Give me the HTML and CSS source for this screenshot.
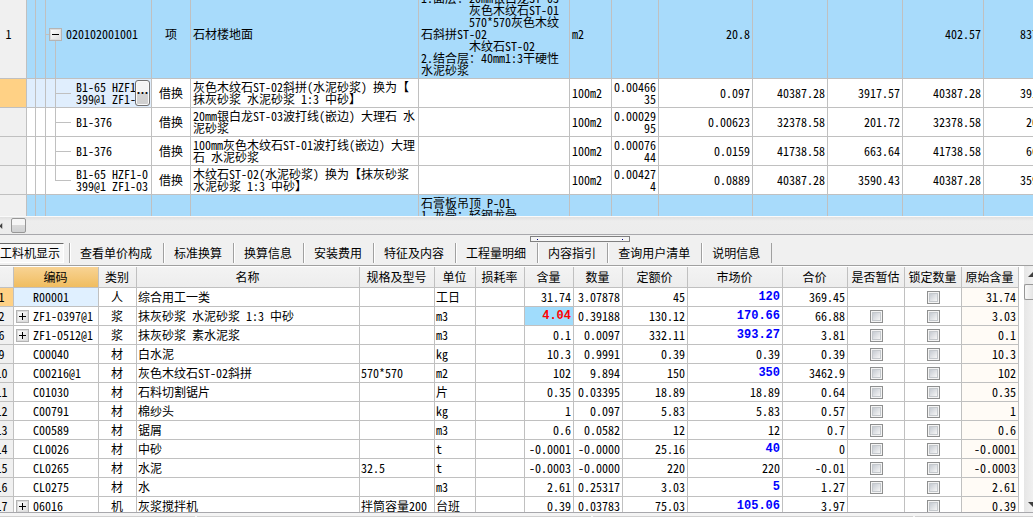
FILE: index.html
```
<!DOCTYPE html>
<html lang="zh-CN">
<head>
<meta charset="utf-8">
<title>石材楼地面</title>
<link rel="stylesheet" href="styles.css">
</head>
<body>
<main class="app">
<section class="pane bill-pane">
<table class="grid bill">
<colgroup><col class="w27"><col class="w9"><col class="w10"><col class="w106"><col class="w39"><col><col class="w151"><col class="w42"><col class="w47"><col class="w94"><col class="w75"><col class="w75"><col class="w81"><col class="w83"></colgroup>
<tbody>
<tr class="group tall"><td>1</td><td></td><td></td><td class="root"><div class="node"><button class="toggle" type="button" aria-label="-"></button><span>020102001001</span></div></td><td>项</td><td>石材楼地面</td><td>1.面层：20mm银白龙ST-03<br>        灰色木纹石ST-01<br>        570*570灰色木纹<br>石斜拼ST-02<br>        木纹石ST-02<br>2.结合层：40mm1:3干硬性<br>水泥砂浆</td><td>m2</td><td></td><td>20.8</td><td></td><td></td><td>402.57</td><td>8373.46</td></tr>
<tr class="current"><td></td><td></td><td></td><td class="leaf"><div class="picker"><span>B1-65 HZF1<br>399@1 ZF1-</span><button class="more" type="button">…</button></div></td><td>借换</td><td>灰色木纹石ST-02斜拼(水泥砂浆) 换为【<br>抹灰砂浆 水泥砂浆 1:3 中砂】</td><td></td><td>100m2</td><td>0.00466<br>35</td><td>0.097</td><td>40387.28</td><td>3917.57</td><td>40387.28</td><td>3917.57</td></tr>
<tr><td></td><td></td><td></td><td class="leaf">B1-376</td><td>借换</td><td>20mm银白龙ST-03波打线(嵌边) 大理石 水<br>泥砂浆</td><td></td><td>100m2</td><td>0.00029<br>95</td><td>0.00623</td><td>32378.58</td><td>201.72</td><td>32378.58</td><td>201.72</td></tr>
<tr><td></td><td></td><td></td><td class="leaf">B1-376</td><td>借换</td><td>100mm灰色木纹石ST-01波打线(嵌边) 大理<br>石 水泥砂浆</td><td></td><td>100m2</td><td>0.00076<br>44</td><td>0.0159</td><td>41738.58</td><td>663.64</td><td>41738.58</td><td>663.64</td></tr>
<tr><td></td><td></td><td></td><td class="leaf last">B1-65 HZF1-0<br>399@1 ZF1-03</td><td>借换</td><td>木纹石ST-02(水泥砂浆) 换为【抹灰砂浆<br>水泥砂浆 1:3 中砂】</td><td></td><td>100m2</td><td>0.00427<br>4</td><td>0.0889</td><td>40387.28</td><td>3590.43</td><td>40387.28</td><td>3590.43</td></tr>
<tr class="group next"><td></td><td></td><td></td><td></td><td></td><td></td><td>石膏板吊顶 P-01<br>1.龙骨：轻钢龙骨</td><td></td><td></td><td></td><td></td><td></td><td></td><td></td></tr>
</tbody>
</table>
</section>

<div class="hscroll"><svg class="arrow-left" viewBox="0 0 4 8" aria-hidden="true"><path d="M3 0v8L-1 4z"/></svg><span class="hthumb"></span></div>

<nav class="tabs">
<button class="tab active" type="button">工料机显示</button>
<button class="tab" type="button">查看单价构成</button>
<button class="tab" type="button">标准换算</button>
<button class="tab" type="button">换算信息</button>
<button class="tab" type="button">安装费用</button>
<button class="tab" type="button">特征及内容</button>
<button class="tab" type="button">工程量明细</button>
<button class="tab" type="button">内容指引</button>
<button class="tab" type="button">查询用户清单</button>
<button class="tab" type="button">说明信息</button>
<span class="splitter"></span>
</nav>

<section class="pane materials-pane">
<div class="materials-view">
<table class="grid materials">
<colgroup><col class="w22"><col class="w85"><col class="w38"><col><col class="w75"><col class="w41"><col class="w49"><col class="w49"><col class="w49"><col class="w65"><col class="w95"><col class="w65"><col class="w57"><col class="w57"><col class="w57"></colgroup>
<thead><tr><th></th><th class="sorted">编码</th><th>类别</th><th>名称</th><th>规格及型号</th><th>单位</th><th>损耗率</th><th>含量</th><th>数量</th><th>定额价</th><th>市场价</th><th>合价</th><th>是否暂估</th><th>锁定数量</th><th>原始含量</th></tr></thead>
<tbody>
<tr class="current"><td>1</td><td>R00001</td><td>人</td><td>综合用工一类</td><td></td><td>工日</td><td></td><td>31.74</td><td>3.07878</td><td>45</td><td class="changed">120</td><td>369.45</td><td></td><td><input type="checkbox" aria-label="锁定数量"></td><td>31.74</td></tr>
<tr><td>2</td><td><div class="node"><button class="toggle plus" type="button" aria-label="+"></button><span>ZF1-0397@1</span></div></td><td>浆</td><td>抹灰砂浆 水泥砂浆 1:3 中砂</td><td></td><td>m3</td><td></td><td class="focus">4.04</td><td>0.39188</td><td>130.12</td><td class="changed">170.66</td><td>66.88</td><td><input type="checkbox" aria-label="是否暂估"></td><td><input type="checkbox" aria-label="锁定数量"></td><td>3.03</td></tr>
<tr><td>6</td><td><div class="node"><button class="toggle plus" type="button" aria-label="+"></button><span>ZF1-0512@1</span></div></td><td>浆</td><td>抹灰砂浆 素水泥浆</td><td></td><td>m3</td><td></td><td>0.1</td><td>0.0097</td><td>332.11</td><td class="changed">393.27</td><td>3.81</td><td><input type="checkbox" aria-label="是否暂估"></td><td><input type="checkbox" aria-label="锁定数量"></td><td>0.1</td></tr>
<tr><td>9</td><td>C00040</td><td>材</td><td>白水泥</td><td></td><td>kg</td><td></td><td>10.3</td><td>0.9991</td><td>0.39</td><td>0.39</td><td>0.39</td><td><input type="checkbox" aria-label="是否暂估"></td><td><input type="checkbox" aria-label="锁定数量"></td><td>10.3</td></tr>
<tr><td>10</td><td>C00216@1</td><td>材</td><td>灰色木纹石ST-02斜拼</td><td>570*570</td><td>m2</td><td></td><td>102</td><td>9.894</td><td>150</td><td class="changed">350</td><td>3462.9</td><td><input type="checkbox" aria-label="是否暂估"></td><td><input type="checkbox" aria-label="锁定数量"></td><td>102</td></tr>
<tr><td>11</td><td>C01030</td><td>材</td><td>石料切割锯片</td><td></td><td>片</td><td></td><td>0.35</td><td>0.03395</td><td>18.89</td><td>18.89</td><td>0.64</td><td><input type="checkbox" aria-label="是否暂估"></td><td><input type="checkbox" aria-label="锁定数量"></td><td>0.35</td></tr>
<tr><td>12</td><td>C00791</td><td>材</td><td>棉纱头</td><td></td><td>kg</td><td></td><td>1</td><td>0.097</td><td>5.83</td><td>5.83</td><td>0.57</td><td><input type="checkbox" aria-label="是否暂估"></td><td><input type="checkbox" aria-label="锁定数量"></td><td>1</td></tr>
<tr><td>13</td><td>C00589</td><td>材</td><td>锯屑</td><td></td><td>m3</td><td></td><td>0.6</td><td>0.0582</td><td>12</td><td>12</td><td>0.7</td><td><input type="checkbox" aria-label="是否暂估"></td><td><input type="checkbox" aria-label="锁定数量"></td><td>0.6</td></tr>
<tr><td>14</td><td>CL0026</td><td>材</td><td>中砂</td><td></td><td>t</td><td></td><td>-0.0001</td><td>-0.0000</td><td>25.16</td><td class="changed">40</td><td>0</td><td><input type="checkbox" aria-label="是否暂估"></td><td><input type="checkbox" aria-label="锁定数量"></td><td>-0.0001</td></tr>
<tr><td>15</td><td>CL0265</td><td>材</td><td>水泥</td><td>32.5</td><td>t</td><td></td><td>-0.0003</td><td>-0.0000</td><td>220</td><td>220</td><td>-0.01</td><td><input type="checkbox" aria-label="是否暂估"></td><td><input type="checkbox" aria-label="锁定数量"></td><td>-0.0003</td></tr>
<tr><td>16</td><td>CL0275</td><td>材</td><td>水</td><td></td><td>m3</td><td></td><td>2.61</td><td>0.25317</td><td>3.03</td><td class="changed">5</td><td>1.27</td><td><input type="checkbox" aria-label="是否暂估"></td><td><input type="checkbox" aria-label="锁定数量"></td><td>2.61</td></tr>
<tr><td>17</td><td><div class="node"><button class="toggle plus" type="button" aria-label="+"></button><span>06016</span></div></td><td>机</td><td>灰浆搅拌机</td><td>拌筒容量200</td><td>台班</td><td></td><td>0.39</td><td>0.03783</td><td>75.03</td><td class="changed">105.06</td><td>3.97</td><td></td><td><input type="checkbox" aria-label="锁定数量"></td><td>0.39</td></tr>
</tbody>
</table>
</div>
<div class="vscroll"><svg class="arrow" viewBox="0 0 9 17" aria-hidden="true"><path d="M4 11l5-5v5z"/></svg><span class="vthumb"></span><svg class="arrow bottom" viewBox="0 0 9 17" aria-hidden="true"><path d="M4 7h5v5z"/></svg></div>
</section>

<footer class="status"><span></span><span></span><span></span><span></span></footer>
</main>
</body>
</html>
```

FILE: styles.css
```
* { box-sizing: border-box; }

body {
  margin: 0;
  background: #f0f0f0;
  color: #000;
  font: 12px/12px "Noto Sans Mono CJK SC", "Noto Sans CJK SC", sans-serif;
}

button {
  margin: 0;
  padding: 0;
  border: 0;
  color: inherit;
  font: inherit;
}

.app {
  display: grid;
  grid-template-rows: minmax(0, 216fr) 19px 31px minmax(0, 246fr) 5px;
  grid-template-columns: minmax(0, 1fr);
  height: 100vh;
  overflow: hidden;
}

.pane { overflow: hidden; background: #fff; }

/* Shared grid */
.grid {
  width: 100%;
  table-layout: fixed;
  border-collapse: separate;
  border-spacing: 0;
}

.grid td, .grid th {
  height: 19px;
  padding: 0 2px;
  border-right: 1px solid #c0c0c0;
  border-bottom: 1px solid #c0c0c0;
  overflow: hidden;
  white-space: pre;
  text-align: left;
  vertical-align: middle;
  font-weight: normal;
}

.grid .changed, .grid .focus {
  color: #00f;
  font-family: "Liberation Mono", monospace;
  font-weight: bold;
}

.w9 { width: 9px; }
.w10 { width: 10px; }
.w22 { width: 22px; }
.w27 { width: 27px; }
.w38 { width: 38px; }
.w39 { width: 39px; }
.w41 { width: 41px; }
.w42 { width: 42px; }
.w47 { width: 47px; }
.w49 { width: 49px; }
.w57 { width: 57px; }
.w65 { width: 65px; }
.w75 { width: 75px; }
.w81 { width: 81px; }
.w83 { width: 83px; }
.w85 { width: 85px; }
.w94 { width: 94px; }
.w95 { width: 95px; }
.w106 { width: 106px; }
.w151 { width: 151px; }

.node { display: flex; align-items: center; gap: 4px; }

.toggle {
  flex: none;
  width: 13px;
  height: 13px;
  border: 1px solid #b4b4b4;
  background:
    linear-gradient(#000, #000) center / 7px 1px no-repeat,
    linear-gradient(135deg, #fff, #dcdcdc);
  box-shadow: inset 0 0 0 1px #dcdcdc;
}

.toggle.plus {
  background:
    linear-gradient(#000, #000) center / 7px 1px no-repeat,
    linear-gradient(#000, #000) center / 1px 7px no-repeat,
    linear-gradient(135deg, #fff, #dcdcdc);
}

/* Bill of quantities */
.bill { min-width: 1067px; margin-top: -10px; }
.bill td { height: 29px; }
.bill .tall td { height: 89px; }
.bill .next td { height: 40px; vertical-align: top; padding-top: 2px; }
.bill td:nth-child(-n+3) { padding: 0; }
.bill td:first-child { background: #f0f0f0; padding-right: 9px; text-align: center; }
.bill td:nth-child(5) { text-align: center; }
.bill td:nth-child(n+9) { text-align: right; }
.bill td:last-child { padding-right: 4px; }
.bill .group td:nth-child(n+2) { background-color: #a8dbfb; }
.bill .current td:first-child { background: #ffd185; }
.bill .current td:nth-child(n+2):nth-child(-n+4) { background-color: #e0eefd; }

.bill .root {
  padding: 0 0 0 3px;
  background-image: linear-gradient(#c0c0c0, #c0c0c0), linear-gradient(#c0c0c0, #c0c0c0);
  background-position: 9px 100%, 0 50%;
  background-size: 1px 50%, 4px 1px;
  background-repeat: no-repeat;
}

.bill .leaf {
  padding-left: 30px;
  background-image: linear-gradient(#c0c0c0, #c0c0c0), linear-gradient(#c0c0c0, #c0c0c0);
  background-position: 9px 0, 9px 50%;
  background-size: 1px 100%, 16px 1px;
  background-repeat: no-repeat;
}

.bill .leaf.last { background-size: 1px 50%, 16px 1px; }

.picker { display: flex; align-items: center; margin-right: -1px; }
.picker span { flex: 1; min-width: 0; overflow: hidden; }

.more {
  flex: none;
  width: 15px;
  height: 26px;
  border: 1px solid #707070;
  border-radius: 3px;
  background: linear-gradient(#f4f4f4 45%, #d4d4d4 50%, #cfcfcf);
  box-shadow: inset 0 0 0 1px #fafafa;
  font-weight: bold;
}

/* Horizontal scroll bar */
.hscroll {
  display: flex;
  align-items: center;
  gap: 8px;
  border-top: 1px solid #fafafa;
  border-bottom: 1px solid #a8a8ac;
  background: linear-gradient(#e0e0e0, #ededed 4px, #ececec);
}

.arrow-left { width: 3px; height: 8px; fill: #404040; }

.hthumb {
  width: 15px;
  height: 15px;
  border: 1px solid #979797;
  border-radius: 2px;
  background: linear-gradient(#f6f6f6 45%, #dadada 50%, #cfd0d2);
}

/* Detail tabs */
.tabs {
  position: relative;
  display: flex;
  align-items: flex-start;
  padding: 8px 0 0;
  border-bottom: 1px solid #a0a0a0;
}

.tab {
  flex: none;
  height: 20px;
  padding: 0 11px 0 10px;
  border-left: 1px solid #a0a0a0;
  box-shadow: inset 1px 0 #fff;
  background: none;
  white-space: nowrap;
}

.tab:nth-last-child(2) { border-right: 1px solid #a0a0a0; }

.tab.active {
  margin: 0 5px 0 -4px;
  padding: 0 3px;
  border: 1px solid #fff;
  border-top-color: #696969;
  box-shadow: none;
  background: #f8f8f8;
}

.splitter {
  position: absolute;
  top: 1px;
  left: 51.3%;
  width: 100px;
  height: 6px;
  border: 1px solid #808080;
  background:
    linear-gradient(#000080, #000080) 6px 2px / 1px 1px no-repeat,
    linear-gradient(#000080, #000080) 91px 2px / 1px 1px no-repeat,
    #f6f6f6;
}

/* Materials list */
.materials-pane { display: flex; }
.materials-view { flex: 1; min-width: 0; margin-left: -8px; padding-top: 1px; }
.materials th { height: 21px; padding: 0 1px 0 0; background: linear-gradient(#f3f3f3, #ededed); text-align: center; }
.materials .sorted { background: linear-gradient(#f8d394, #f0bd60); }
.materials td:first-child { padding: 0 2px 0 0; background: #f0f0f0; text-align: center; }
.materials td:nth-child(2) { padding-left: 19px; }
.materials td:nth-child(2):has(.node) { padding-left: 2px; }
.materials td:nth-child(3) { padding: 0 1px 0 0; text-align: center; }
.materials td:nth-child(4) { padding-left: 1px; }
.materials td:nth-child(5) { padding-left: 1px; }
.materials td:nth-child(6) { padding-left: 1px; }
.materials td:nth-child(n+8) { text-align: right; }
.materials td:nth-child(13), .materials td:nth-child(14) { text-align: center; }
.materials td:last-child { background: #fffbf6; }
.materials .current td:first-child { background: #ffd185; }
.materials .current td:nth-child(2) { background: #e0f0ff; }
.materials .focus { background: #a0dcfc; color: #f00; }

.materials input {
  display: block;
  width: 13px;
  height: 13px;
  margin: 0 auto;
  appearance: none;
  border: 1px solid #8e8f8f;
  background: linear-gradient(135deg, #c6cbd2, #f6f6f6) center / 7px 7px no-repeat, #f4f4f4;
  box-shadow: inset 0 0 0 1px #f4f4f4, inset 0 0 0 2px #c4c8cc;
}

.vscroll {
  flex: none;
  display: flex;
  flex-direction: column;
  width: 14px;
  border-left: 5px solid #fff;
  background: linear-gradient(90deg, #e6e6e6, #f0f0f0);
}

.arrow { width: 9px; height: 17px; fill: #404040; }
.arrow.bottom { margin-top: auto; }

.vthumb {
  height: 16px;
  margin-top: 1px;
  border: 1px solid #979797;
  border-right: 0;
  border-radius: 2px 0 0 2px;
  background: linear-gradient(90deg, #f8f8f8, #e4e4e4);
}

/* Status bar */
.status {
  display: grid;
  grid-template-columns: 195fr 393fr 320fr 118fr;
  gap: 2px;
  padding-top: 3px;
  border-top: 1px solid #a8a8ac;
  background: #f4f4f4;
}

.status span { border-top: 1px solid #d0d0d0; background: #f0f0f0; }
```
